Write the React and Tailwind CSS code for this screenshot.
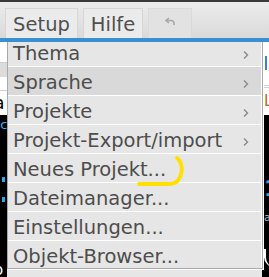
import React from "react";

const items = [
  { label: "Thema", sub: true, first: true },
  { label: "Sprache", sub: true, active: true },
  { label: "Projekte", sub: true },
  { label: "Projekt-Export/import", sub: true },
  { label: "Neues Projekt..." },
  { label: "Dateimanager..." },
  { label: "Einstellungen..." },
  { label: "Objekt-Browser...", last: true },
];

function Chevron() {
  return (
    <svg width="6" height="10" viewBox="0 0 6 10" className="shrink-0">
      <path d="M1 1.5 L4.5 5 L1 8.5" fill="none" stroke="#8a8a8a" strokeWidth="1.4" />
    </svg>
  );
}

export default function App() {
  return (
    <div
      className="relative w-[269px] h-[277px] overflow-hidden bg-black"
      style={{ fontFamily: '"DejaVu Sans", Verdana, sans-serif' }}
    >
      {/* top dark line */}
      <div className="h-[2px] bg-[#3a3a3a]" />
      {/* toolbar */}
      <div className="h-[36px] bg-gradient-to-b from-[#ececec] to-[#dadada] flex items-end gap-[5px] pl-[5px]">
        <div className="h-[30px] w-[73px] bg-[#ebebeb] border border-[#d6d6d6] border-b-0 flex items-center justify-center text-[19.5px] text-[#505050] leading-none pt-[3px]">
          Setup
        </div>
        <div className="h-[30px] w-[60px] bg-[#ebebeb] border border-[#d6d6d6] border-b-0 flex items-center justify-center text-[19.5px] text-[#505050] leading-none pt-[3px]">
          Hilfe
        </div>
        <div className="h-[30px] w-[44px] bg-[#e2e2e2] border border-[#dadada] border-b-0 flex items-center justify-center pb-[4px]">
          <svg width="10" height="9" viewBox="0 0 10 9">
            <path d="M4 1 L1 3.5 L4 6 M1.5 3.5 H6 Q9 3.5 9 6.5 V8" fill="none" stroke="#a8a8a8" strokeWidth="1.6" />
          </svg>
        </div>
      </div>
      {/* blue line */}
      <div className="h-[4px] bg-[#3a8fd2]" />
      {/* body behind the menu */}
      <div className="flex h-[235px]">
        <div className="w-[7px] flex flex-col">
          <div className="h-[21px] bg-white border-b border-[#cfcfcf]" />
          <div className="h-[14px] bg-[#dcdcdc]" />
          <div className="h-[14px] bg-white border-b border-[#cfcfcf]" />
          <div className="h-[24px] bg-white text-[17px] leading-[24px] text-black overflow-hidden -ml-[6px]">a</div>
          <div className="flex-1 bg-black flex flex-col">
            <div className="text-[13px] leading-[16px] text-[#3fb5ea] -ml-[8px] mt-[2px]">nc</div>
            <div className="mt-[44px] ml-[2px] w-[3px] h-[5px] bg-[#29a8e8]" />
            <div className="mt-[15px] ml-[2px] w-[3px] h-[5px] bg-[#29a8e8]" />
            <div className="mt-auto text-[15px] leading-[14px] text-white -ml-[6px]">o</div>
          </div>
        </div>
        <div className="flex-1 bg-[#e6e6e6]" />
        <div className="w-[7px] flex flex-col">
          <div className="h-[43px] bg-white pt-[14px] pl-[3px]">
            <div className="w-[2px] h-[14px] bg-[#3a7fe0]" />
          </div>
          <div className="h-[3px] bg-white border-y border-[#cfcfcf]" />
          <div className="h-[27px] bg-white text-[15px] leading-[27px] text-[#b06a2a] pl-[2px] overflow-hidden">L</div>
          <div className="flex-1 bg-black flex flex-col pl-[2px]">
            <div className="mt-[62px] text-[22px] leading-[24px] font-bold text-[#1cb0f0]">1</div>
            <div className="mt-[12px] text-[11px] leading-[10px] text-[#bbb]">a</div>
            <div className="mt-auto mb-[10px] w-[10px] h-[18px] border-l-2 border-white rounded-bl-full" />
          </div>
        </div>
      </div>

      {/* dropdown menu */}
      <div className="absolute left-[7px] top-[42px] w-[256px] bg-[#e6e6e6] border-l border-b border-r border-[#a9a9a9] shadow-[1px_1px_0_#ffffff]">
        <div className="border-r border-white">
          {items.map((it) => (
            <div
              key={it.label}
              className={
                (it.first ? "h-[25px] pt-[1px] " : it.last ? "h-[27px] pt-[5px] " : "h-[29px] pt-[5px] ") +
                (it.last ? "" : "border-b border-white ") +
                (it.active ? "bg-[#d9d9d9] " : "bg-[#e6e6e6] ") +
                "flex items-start pl-[5px] pr-[12px] text-[19.5px] leading-[22px] text-[#4d4d4d] whitespace-nowrap"
              }
            >
              <span className="flex-1">{it.label}</span>
              {it.sub && (
                <span className="h-[22px] flex items-center pt-[2px]">
                  <Chevron />
                </span>
              )}
            </div>
          ))}
        </div>
      </div>

      {/* yellow annotation */}
      <svg className="absolute left-0 top-0 pointer-events-none" width="269" height="277">
        <path
          d="M177 158 C183 163 183 172 179 179 Q176 184 169 184 L139 184"
          fill="none"
          stroke="#ffe000"
          strokeWidth="3.8"
          strokeLinecap="round"
          strokeLinejoin="round"
        />
      </svg>
    </div>
  );
}
